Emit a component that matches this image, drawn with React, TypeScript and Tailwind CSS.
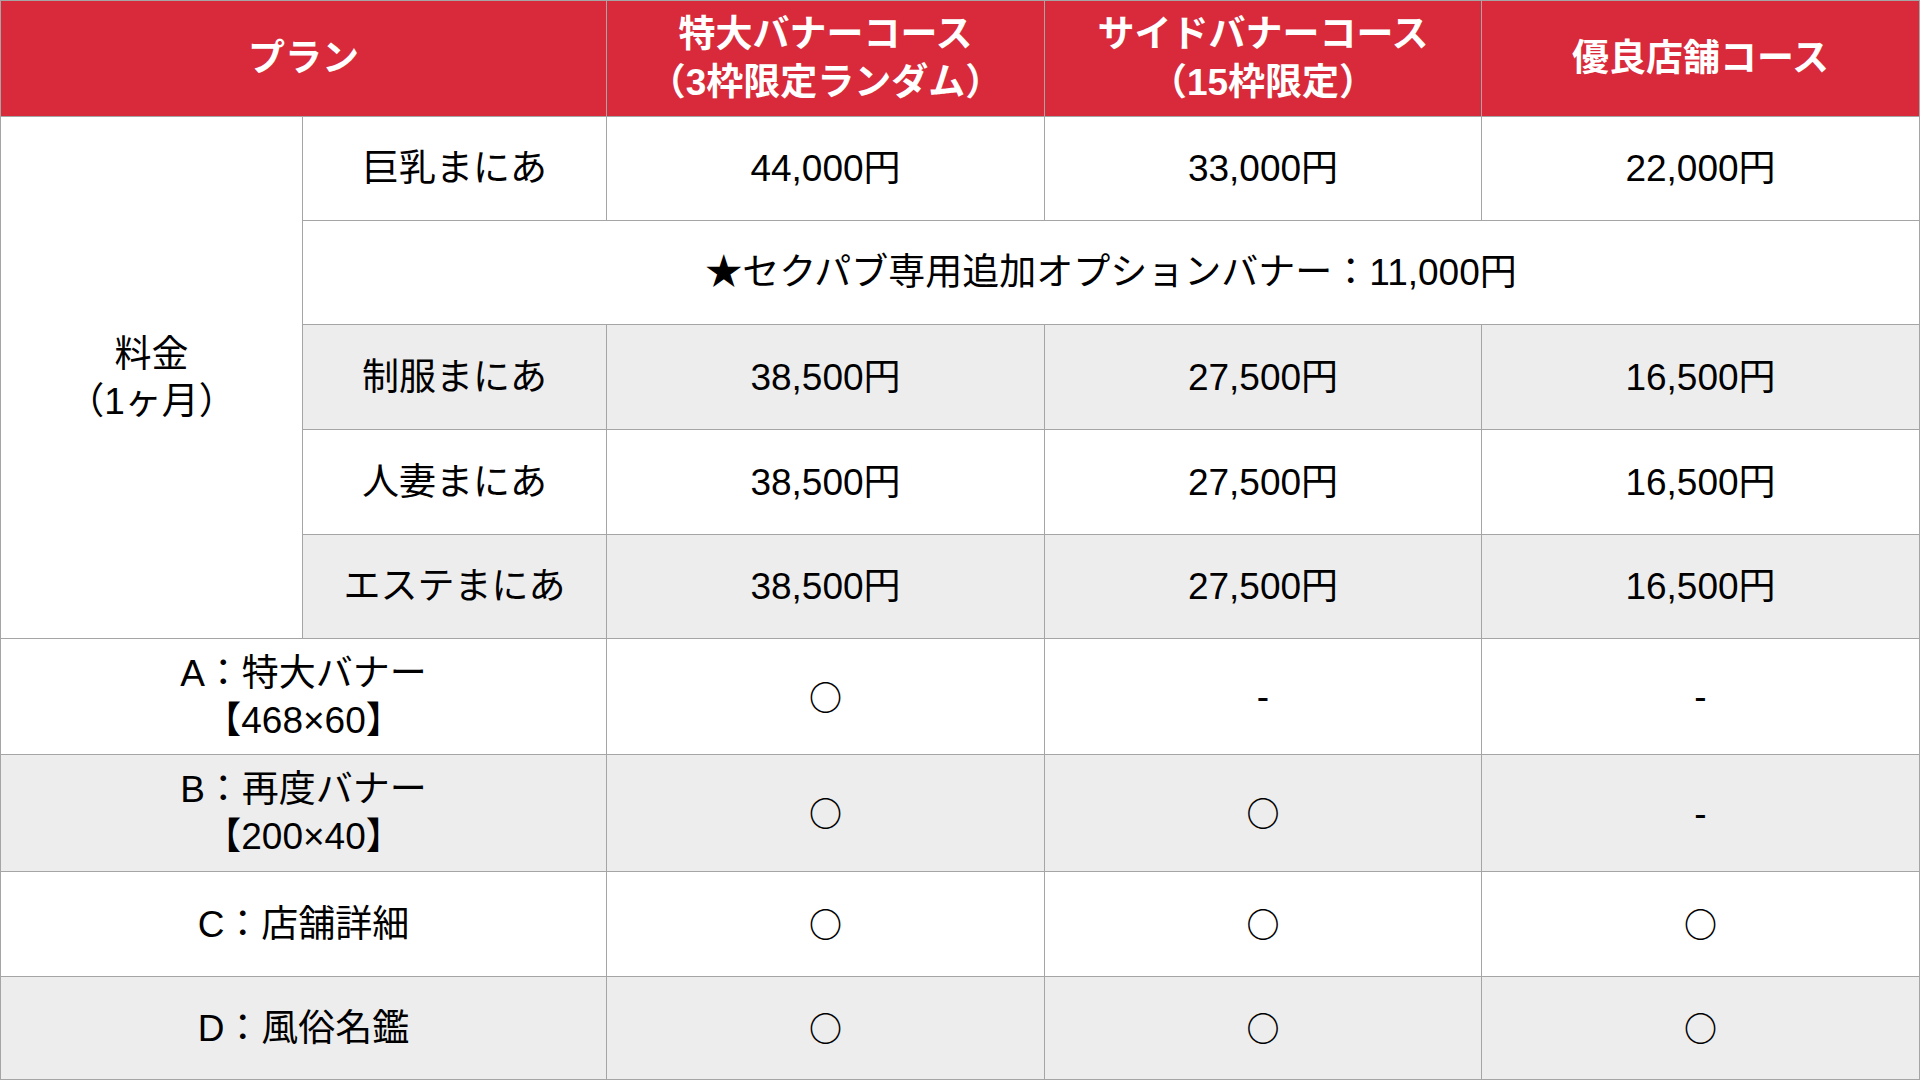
import React from "react";

const font = "font-['Liberation_Sans','Noto_Sans_CJK_JP',sans-serif]";

type Cell = {
  text: React.ReactNode;
  gray?: boolean;
  span?: string;
};

const cellBase = "flex items-center justify-center text-center text-[37px] leading-[47px] text-black";

function C({ text, gray, span }: Cell) {
  return (
    <div className={`${cellBase} ${gray ? "bg-[#ededed]" : "bg-white"} ${span ?? ""}`}>
      <div>{text}</div>
    </div>
  );
}

function H({ children, span }: { children: React.ReactNode; span?: string }) {
  return (
    <div
      className={`flex items-center justify-center text-center bg-[#d82a3a] text-white font-bold text-[37px] leading-[48px] ${span ?? ""}`}
    >
      <div>{children}</div>
    </div>
  );
}

function Mark({ m }: { m: string }) {
  if (m === "-") return <span>-</span>;
  return <span className="font-['Noto_Sans_CJK_JP',sans-serif] text-[33px] font-bold">○</span>;
}

const priceRows = [
  { name: "制服まにあ", prices: ["38,500円", "27,500円", "16,500円"], gray: true },
  { name: "人妻まにあ", prices: ["38,500円", "27,500円", "16,500円"], gray: false },
  { name: "エステまにあ", prices: ["38,500円", "27,500円", "16,500円"], gray: true },
];

const features = [
  { label: ["A：特大バナー", "【468×60】"], marks: ["○", "-", "-"], gray: false },
  { label: ["B：再度バナー", "【200×40】"], marks: ["○", "○", "-"], gray: true },
  { label: ["C：店舗詳細"], marks: ["○", "○", "○"], gray: false },
  { label: ["D：風俗名鑑"], marks: ["○", "○", "○"], gray: true },
];

export default function App() {
  return (
    <div className={`${font} w-[1920px] h-[1080px] bg-white`}>
      <div className="grid w-[1920px] h-[1080px] gap-px border border-[#a5a5a5] bg-[#a5a5a5] grid-cols-[301px_303px_437px_436px_437px] grid-rows-[115px_103px_103px_104px_104px_103px_115px_116px_104px_102px]">
        {/* header */}
        <H span="col-span-2">プラン</H>
        <H>
          特大バナーコース
          <br />
          （3枠限定ランダム）
        </H>
        <H>
          サイドバナーコース
          <br />
          （15枠限定）
        </H>
        <H>優良店舗コース</H>

        {/* 料金 */}
        <C
          span="row-span-5"
          text={
            <>
              料金
              <br />
              （1ヶ月）
            </>
          }
        />
        <C text="巨乳まにあ" />
        <C text="44,000円" />
        <C text="33,000円" />
        <C text="22,000円" />

        <C span="col-span-4" text="★セクパブ専用追加オプションバナー：11,000円" />

        {priceRows.map((r) => (
          <React.Fragment key={r.name}>
            <C gray={r.gray} text={r.name} />
            {r.prices.map((p, i) => (
              <C key={i} gray={r.gray} text={p} />
            ))}
          </React.Fragment>
        ))}

        {features.map((f) => (
          <React.Fragment key={f.label[0]}>
            <C
              span="col-span-2"
              gray={f.gray}
              text={f.label.map((l, i) => (
                <div key={i}>{l}</div>
              ))}
            />
            {f.marks.map((m, i) => (
              <C key={i} gray={f.gray} text={<Mark m={m} />} />
            ))}
          </React.Fragment>
        ))}
      </div>
    </div>
  );
}
